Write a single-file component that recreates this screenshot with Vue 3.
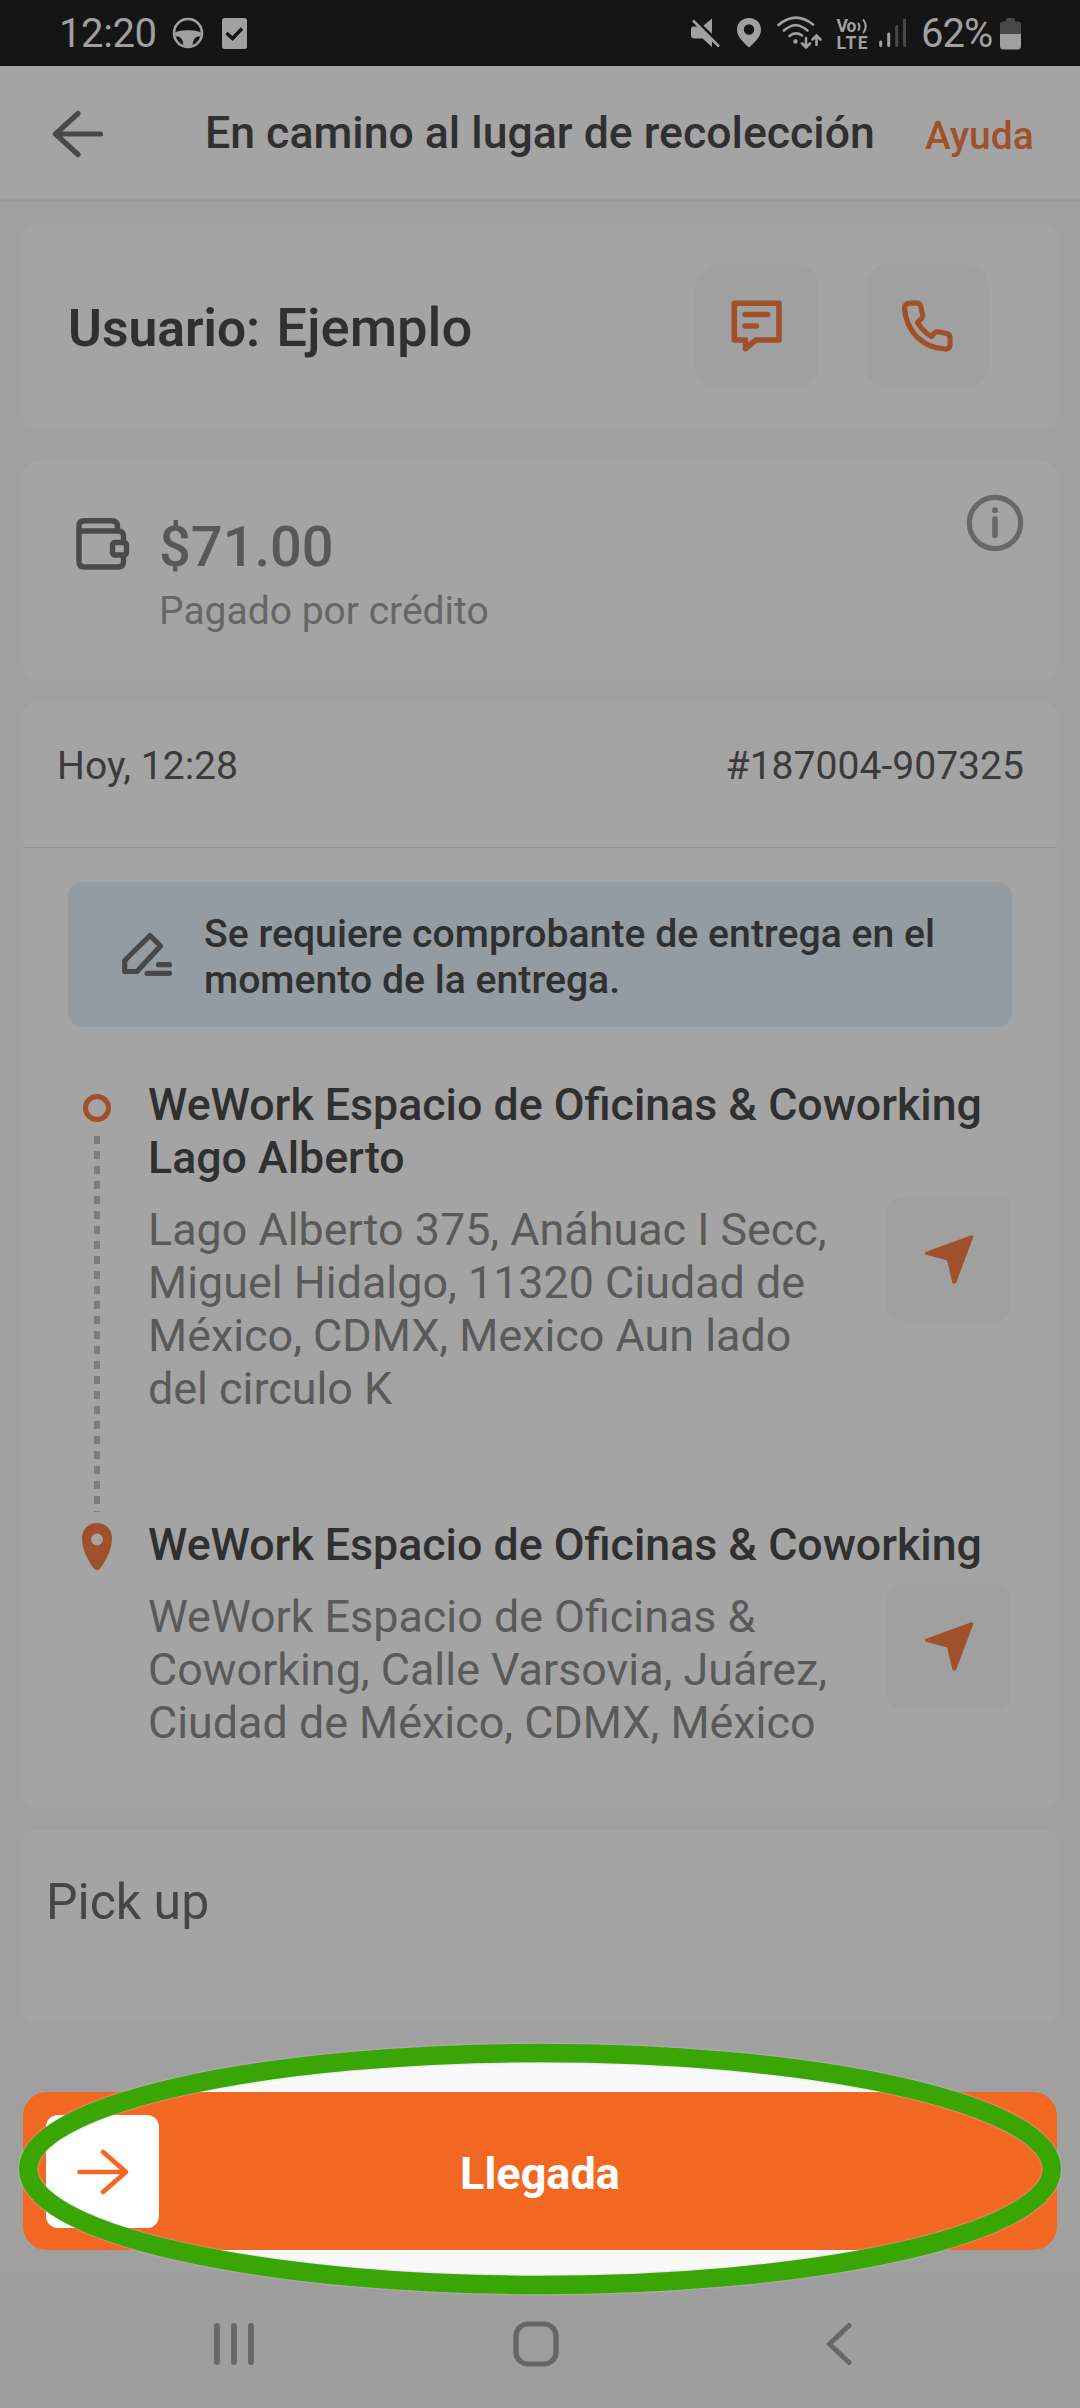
<script setup>
const stops = [
  {
    kind: 'start',
    title: ['WeWork Espacio de Oficinas & Coworking', 'Lago Alberto'],
    address: ['Lago Alberto 375, Anáhuac I Secc,', 'Miguel Hidalgo, 11320 Ciudad de', 'México, CDMX, Mexico Aun lado', 'del circulo K'],
  },
  {
    kind: 'end',
    title: ['WeWork Espacio de Oficinas & Coworking'],
    address: ['WeWork Espacio de Oficinas &', 'Coworking, Calle Varsovia, Juárez,', 'Ciudad de México, CDMX, México'],
  },
]
</script>

<template>
  <div class="screen">
    <div class="status">
      <span class="clock">12:20</span>
      <svg class="wheel" width="32" height="32" viewBox="0 0 32 32">
        <circle cx="16" cy="16" r="14" fill="none" stroke="#a0a0a0" stroke-width="2.6" />
        <path d="M3 15.5C8 12.4 24 12.4 29 15.5L28.6 19.5C24 19 21.5 20.500 20.500 28.500L16 30L11.500 28.500C10.500 20.500 8 19 3.400 19.500Z" fill="#a0a0a0" />
      </svg>
      <svg class="task" width="25" height="31" viewBox="0 0 25 31">
        <rect width="25" height="31" rx="2.500" fill="#a0a0a0" />
        <path d="M4.500 15L10.500 20.500L20 10.500" fill="none" stroke="#151515" stroke-width="3.400" />
      </svg>
      <span class="grow"></span>
      <svg class="s-icons" width="217" height="36" viewBox="690 15 217 36">
        <g fill="#a0a0a0">
          <path d="M712 18.500V34L703 26ZM693.500 26.500H699L712 39V47L702.500 38.500H694.500Q691 38.500 691 35.500V29.500Q691 26.500 693.500 26.500Z" />
          <path d="M695 19L721.500 45" stroke="#151515" stroke-width="2.400" />
          <path d="M693 20.500L719 46.500" stroke="#a0a0a0" stroke-width="2.600" />
          <path fill-rule="evenodd" d="M749 18C742 18 737 23 737 29.500C737 37 743 42 749 47.500C755 42 761 37 761 29.500C761 23 756 18 749 18ZM749 24.300A5.200 5.200 0 1 1 749 34.700A5.200 5.200 0 1 1 749 24.300Z" />
          <circle cx="795.500" cy="41.500" r="2.200" />
        </g>
        <g fill="none" stroke="#a0a0a0" stroke-width="2.600" stroke-linecap="round">
          <path d="M778.500 25Q795.500 10.500 813 24.500M784 30.500Q795.500 20 807.500 30.500M789.500 36Q795.500 31 802 35.500" />
          <path d="M806 38V47M802 43.500L806 47.500L810 43.500M816.500 45V36M812.500 39.500L816.500 35.500L820.500 39.500" />
          <path d="M858.500 23.500Q860.500 26.500 858.500 30M863.500 20Q868 26 863.500 32.500" stroke-width="2" />
        </g>
        <g class="volte" fill="#a0a0a0">
          <text x="836.500" y="31.500" font-size="17.500" textLength="20">Vo</text>
          <text x="836.500" y="48.500" font-size="17.500" textLength="31">LTE</text>
        </g>
        <g stroke-width="3" stroke-linecap="round">
          <path d="M880.700 42V45.500M888.700 34V45.500" stroke="#a0a0a0" />
          <path d="M896.700 26.500V45.500M904.500 20V45.500" stroke="#484848" />
        </g>
      </svg>
      <span class="percent">62%</span>
      <svg width="21" height="33" viewBox="0 0 21 33">
        <path d="M6 3Q6 1 8 1H13Q15 1 15 3V4.500H18Q21 4.500 21 7.500V17H0V7.500Q0 4.500 3 4.500H6Z" fill="#484848" />
        <path d="M0 17H21V29Q21 32.500 17.500 32.500H3.500Q0 32.500 0 29Z" fill="#a0a0a0" />
      </svg>
    </div>

    <header class="header">
      <svg class="back" width="54" height="48" viewBox="0 0 54 48">
        <path d="M27 3.500L4.500 24L27 44.500M4.500 24H49.500" fill="none" stroke="#484848" stroke-width="5.200" stroke-linecap="round" stroke-linejoin="round" />
      </svg>
      <h1 class="title">En camino al lugar de recolección</h1>
      <a class="help">Ayuda</a>
    </header>

    <main class="body">
      <section class="card user">
        <p class="name"><b>Usuario:</b><span>Ejemplo</span></p>
        <button class="tile">
          <svg width="54" height="54" viewBox="0 0 54 54" fill="none" stroke="#a0502b" stroke-width="5.600" stroke-linecap="round" stroke-linejoin="round">
            <path d="M4.300 4.300H49V41H26L15.500 49.500V41H4.300ZM15 15.500H37.500M15 27H26.500" />
          </svg>
        </button>
        <button class="tile">
          <svg width="54" height="54" viewBox="0 0 54 54" fill="none" stroke="#a0502b" stroke-width="5.200" stroke-linejoin="round">
            <path d="M9.500 4.200H17C19 4.200 20.300 5.500 20.700 7.300L22.700 16C23 17.500 22.500 18.500 21.500 19.700L17.500 23.500C21 29.500 25.500 34 31.500 37.500L34.300 34.200C35.500 33 37 32.500 38.500 32.800L46.500 34.500C48.500 35 50 36.300 50 38.500V45.500C50 48.500 48 50.300 45 50C22 48.500 6.500 32.500 4.500 9.500C4.300 6.500 6.300 4.200 9.500 4.200Z" />
          </svg>
        </button>
      </section>

      <section class="card pay">
        <svg class="wallet" width="56" height="54" viewBox="0 0 56 54" fill="none" stroke="#4a4a4a" stroke-width="5.400" stroke-linejoin="round">
          <path d="M4 14V44.500Q4 50 9.500 50H43Q48.500 50 48.500 44.500V40M48.500 24V19.500Q48.500 14 43 14H4V9Q4 3.700 9.500 3.700H36.500Q42.500 3.700 42.500 9.500V13" />
          <rect x="37.500" y="25.500" width="14" height="12.500" rx="2.500" />
        </svg>
        <div class="amounts">
          <strong>$71.00</strong>
          <span>Pagado por crédito</span>
        </div>
        <svg class="info" width="58" height="58" viewBox="0 0 58 58" fill="none" stroke="#686868">
          <circle cx="29" cy="29" r="25.700" stroke-width="5.200" />
          <path d="M29 25V41.500" stroke-width="5.600" stroke-linecap="round" />
          <circle cx="29" cy="16.300" r="3" fill="#686868" stroke="none" />
        </svg>
      </section>

      <section class="card trip">
        <div class="meta"><span>Hoy, 12:28</span><span class="order">#187004-907325</span></div>
        <div class="notice">
          <svg width="54" height="48" viewBox="0 0 54 48" fill="none" stroke="#484848" stroke-width="5.200" stroke-linejoin="round">
            <path d="M4.700 29.500L30 4.500L40.500 15L17 40.500H4.700Z" />
            <path d="M38.500 33.700H49.500M27 42.300H49.500" stroke-linecap="round" />
          </svg>
          <p>Se requiere comprobante de entrega en el<br />momento de la entrega.</p>
        </div>
        <div v-for="stop in stops" :key="stop.kind" class="stop" :class="stop.kind">
          <div class="rail">
            <template v-if="stop.kind === 'start'">
              <i class="ring"></i>
              <i class="dashes"></i>
            </template>
            <svg v-else width="30" height="48" viewBox="0 0 30 48">
              <path fill-rule="evenodd" d="M15 0C6 0 0 6.500 0 15.500C0 27 7 39 11.500 45C13.500 47.600 16.500 47.600 18.500 45C23 39 30 27 30 15.500C30 6.500 24 0 15 0ZM15 10.500A6 6 0 1 1 15 22.500A6 6 0 1 1 15 10.500Z" fill="#a0502b" />
            </svg>
          </div>
          <div class="place">
            <h2><template v-for="line in stop.title" :key="line">{{ line }}<br /></template></h2>
            <div class="where">
              <p><template v-for="line in stop.address" :key="line">{{ line }}<br /></template></p>
              <button class="tile nav">
                <svg width="50" height="50" viewBox="0 0 50 50">
                  <path d="M48 1.500L1.500 18.500V20L23.500 26L29 49H31.500L49 2.500Z" fill="#a0502b" stroke="#a0502b" stroke-linejoin="round" />
                </svg>
              </button>
            </div>
          </div>
        </div>
      </section>

      <section class="card pickup">Pick up</section>
    </main>

    <div class="action">
      <svg class="halo" width="1080" height="264" viewBox="0 0 1080 264">
        <ellipse cx="540" cy="132" rx="512" ry="116" fill="#f9f9f9" />
      </svg>
      <button class="slide">
        <span class="knob">
          <svg width="54" height="48" viewBox="0 0 54 48">
            <path d="M27 4L50 24L27 44M3.500 24H50" fill="none" stroke="#f26722" stroke-width="4.600" stroke-linecap="round" stroke-linejoin="round" />
          </svg>
        </span>
        <span class="label">Llegada</span>
      </button>
      <svg class="halo" width="1080" height="264" viewBox="0 0 1080 264" fill="none">
        <ellipse cx="540" cy="132" rx="511.800" ry="116" stroke="#3aa606" stroke-width="18.500" />
      </svg>
    </div>

    <nav class="system">
      <svg width="42" height="44" viewBox="0 0 42 44"><path d="M4 4V40M21 4V40M38 4V40" stroke="#676767" stroke-width="5.800" stroke-linecap="round" /></svg>
      <svg class="home" width="46" height="46" viewBox="0 0 46 46"><rect x="3" y="3" width="40" height="40" rx="12" fill="none" stroke="#676767" stroke-width="5.200" /></svg>
      <svg width="28" height="44" viewBox="0 0 28 44"><path d="M24 3.500L4.500 22L24 40.500" fill="none" stroke="#676767" stroke-width="5" stroke-linecap="round" /></svg>
    </nav>
  </div>
</template>

<style>
body { margin: 0; background: #a0a0a0; }
</style>

<style scoped>
.screen { width: 1080px; height: 2408px; overflow: hidden; display: flex; flex-direction: column; background: #a0a0a0; color: #303030; font-family: Roboto, "Liberation Sans", sans-serif; }
.screen * { box-sizing: border-box; }
h1, h2, p { margin: 0; font-weight: 500; }
button { border: 0; padding: 0; font: inherit; }
svg { display: block; flex: none; }
span, p, h1, h2, strong, a { white-space: nowrap; }

.status { height: 66px; flex: none; display: flex; align-items: center; padding: 0 59px; background: #151515; color: #a0a0a0; font-size: 40px; }
.clock { width: 113px; letter-spacing: -0.4px; }
.task { margin-left: 18px; }
.grow { flex: 1; }
.percent { width: 77px; margin-left: 14px; margin-right: 2px; letter-spacing: -1px; }
.volte { font-weight: 700; }

.header { height: 135px; flex: none; display: flex; align-items: center; padding: 0 0 0 51px; background: #a4a4a4; border-bottom: 3px solid #9b9b9b; }
.back { margin-top: 3px; }
.title { margin-left: 100px; margin-top: 2px; width: 720px; font-size: 44.600px; }
.help { margin-top: 7px; color: #a0502b; font-size: 39px; font-weight: 500; }

.body { display: flex; flex-direction: column; padding: 23px 23px 0; }
.card { background: #a4a4a4; border-radius: 10px; }
.user { height: 203px; display: flex; align-items: center; padding: 0 68px 0 45px; gap: 46px; }
.name { flex: 1; display: flex; align-items: baseline; gap: 16px; padding-top: 3px; font-size: 54.400px; }
.name b { font-size: 51.600px; font-weight: 600; }
.tile { width: 124px; height: 124px; border-radius: 24px; background: #a0a0a0; display: flex; align-items: center; justify-content: center; }

.pay { margin-top: 34px; height: 219px; border-radius: 14px; display: flex; align-items: flex-start; padding: 33px 33px 0 52px; }
.wallet { margin-top: 23px; }
.amounts { flex: 1; padding-left: 28px; padding-top: 20px; display: flex; flex-direction: column; }
.amounts strong { font-size: 56px; line-height: 66px; font-weight: 500; color: #585858; }
.amounts span { font-size: 39px; line-height: 62px; color: #666; }

.trip { margin-top: 23px; height: 1105px; }
.meta { height: 145px; display: flex; justify-content: space-between; padding: 39px 33px 0 34px; font-size: 39.100px; line-height: 49px; color: #3b3b3b; border-bottom: 1px solid #8f9294; }
.notice { margin: 34px 45px 0; height: 145px; border-radius: 14px; background: #939ba3; display: flex; align-items: center; padding-left: 52px; font-size: 39.200px; line-height: 46px; }
.notice p { margin-left: 30px; margin-top: 4px; }
.stop { display: flex; padding: 0 46px 0 59px; }
.rail { width: 30px; display: flex; flex-direction: column; align-items: center; }
.start { margin-top: 51px; height: 440px; }
.ring { width: 28px; height: 28px; margin-top: 16px; border: 5px solid #a0502b; border-radius: 50%; flex: none; }
.dashes { width: 6px; height: 376px; margin-top: 14px; background: repeating-linear-gradient(#7d7d7d 0 8px, transparent 8px 15px); }
.end .rail { padding-top: 5px; }
.place { flex: 1; padding-left: 36px; }
h2 { padding-top: 1px; font-size: 44.700px; line-height: 53px; }
.where { display: flex; justify-content: space-between; }
.where p { margin-top: 18px; font-size: 44.850px; line-height: 53px; font-weight: 400; color: #5a5a5a; }
.nav { border-radius: 14px; margin-top: 12px; }
.pickup { margin-top: 22px; height: 193px; padding: 40px 23px; font-size: 50px; line-height: 64px; color: #464646; }

.action { position: relative; height: 158px; margin: 69px 23px 0; flex: none; }
.halo { position: absolute; left: -23px; top: -55px; filter: drop-shadow(0 0 1px #c4c4c4); }
.slide { position: relative; width: 1034px; height: 158px; border-radius: 24px; background: #f26722; display: flex; align-items: center; justify-content: center; }
.knob { position: absolute; left: 23px; top: 23px; width: 113px; height: 113px; border-radius: 12px; background: #fff; display: flex; align-items: center; justify-content: center; }
.label { color: #fff; font-size: 45px; font-weight: 700; padding-top: 4px; }

.system { flex: 1; margin-top: 23px; padding: 6px 227px 0 213px; background: #9e9e9e; display: flex; align-items: center; justify-content: space-between; }
.home { margin-right: 8px; }
</style>
